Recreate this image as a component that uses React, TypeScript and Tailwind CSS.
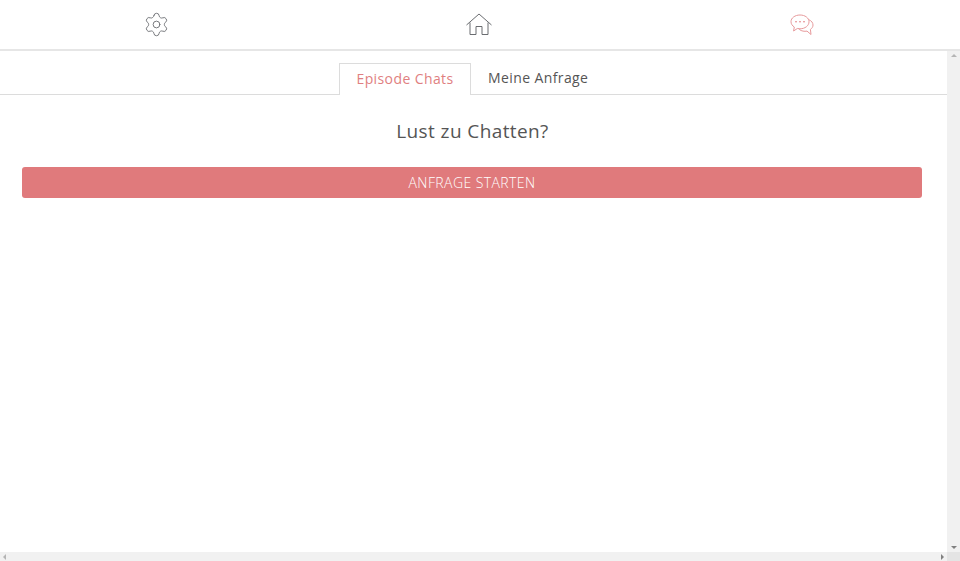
import { Settings } from "lucide-react"

const HomeIcon = () => (
    <svg width="26" height="23" viewBox="0 0 26 23" fill="none" stroke="#6a6c70" strokeWidth="1" strokeLinejoin="round">
        <path d="M.5 12 13 1l12.500 11" />
        <path d="M4 9.500v12h6v-8h6v8h6v-12" />
    </svg>
)

const ChatIcon = () => (
    <svg width="24" height="22" viewBox="0 0 24 22" fill="none" stroke="#e79a9c" strokeWidth="1" strokeLinejoin="round">
        <path d="M10 1C5 1 1 3.900 1 7.700c0 2.200 1.300 4.100 3.300 5.300L3.600 17l3.700-2.500c.9.200 1.800.3 2.700.3 5 0 9-3.100 9-7S15 1 10 1Z" />
        <path d="M19 5.800c2.500 1 4 3 4 5.200 0 1.800-1 3.400-2.600 4.400l.6 5.100-4-3.400c-.6.100-1.300.2-2 .2-2.800 0-5.300-1.100-6.600-2.900" />
        <circle cx="6" cy="7.700" r=".7" fill="#d9575c" stroke="none" />
        <circle cx="10" cy="7.700" r=".7" fill="#d9575c" stroke="none" />
        <circle cx="14" cy="7.700" r=".7" fill="#d9575c" stroke="none" />
    </svg>
)

export default function App() {
    return (
        <div className="flex h-[561px] w-[960px] flex-col overflow-hidden bg-white font-['Open_Sans',sans-serif] text-[#555]">
            {/* Top nav */}
            <header className="flex h-[51px] shrink-0 items-center justify-between border-b-2 border-[#e6e6e6] pl-[144px] pr-[146px]">
                <Settings size={27} strokeWidth={0.8} color="#6a6c70" className="-mx-[1.5px]" />
                <HomeIcon />
                <ChatIcon />
            </header>

            <div className="flex min-h-0 flex-1">
                <main className="min-w-0 flex-1">
                    {/* Tabs */}
                    <div className="mt-3 flex h-[32px] justify-center border-b border-[#dcdcdc] pr-[1px]">
                        <div className="-mb-px flex h-[32px] w-[132px] items-center justify-center border border-b-0 border-[#dcdcdc] bg-white pb-[2px] text-[14px] tracking-[0.4px] text-[#df7f81]">
                            Episode Chats
                        </div>
                        <div className="flex h-[31px] w-[136px] items-center pb-[2px] pl-[17px] text-[14px] tracking-[0.4px] text-[#555]">
                            Meine Anfrage
                        </div>
                    </div>

                    <h2 className="mt-[24px] pr-[2px] text-center text-[19px] leading-6 font-normal tracking-[0.4px] text-[#555]">Lust zu Chatten?</h2>

                    <button className="mt-6 ml-[22px] flex h-[31px] w-[900px] items-center justify-center rounded-[3px] bg-[#e07a7c] text-[14px] font-light tracking-[0.42px] text-white">
                        ANFRAGE STARTEN
                    </button>
                </main>

                {/* Vertical scrollbar */}
                <div className="flex w-[13px] shrink-0 flex-col items-center justify-between bg-[#f1f1f1] py-[3px]">
                    <div className="h-0 w-0 border-x-[3px] border-b-[3px] border-x-transparent border-b-[#b5b5b5]" />
                    <div className="h-0 w-0 border-x-[3px] border-t-[3px] border-x-transparent border-t-[#808080]" />
                </div>
            </div>

            {/* Horizontal scrollbar */}
            <div className="flex h-[9px] shrink-0 bg-[#f1f1f1]">
                <div className="flex flex-1 items-center justify-between px-[3px]">
                    <div className="h-0 w-0 border-y-[3px] border-r-[3px] border-y-transparent border-r-[#b5b5b5]" />
                    <div className="h-0 w-0 border-y-[3px] border-l-[3px] border-y-transparent border-l-[#808080]" />
                </div>
                <div className="w-[13px] bg-[#e4e4e4]" />
            </div>
        </div>
    )
}
